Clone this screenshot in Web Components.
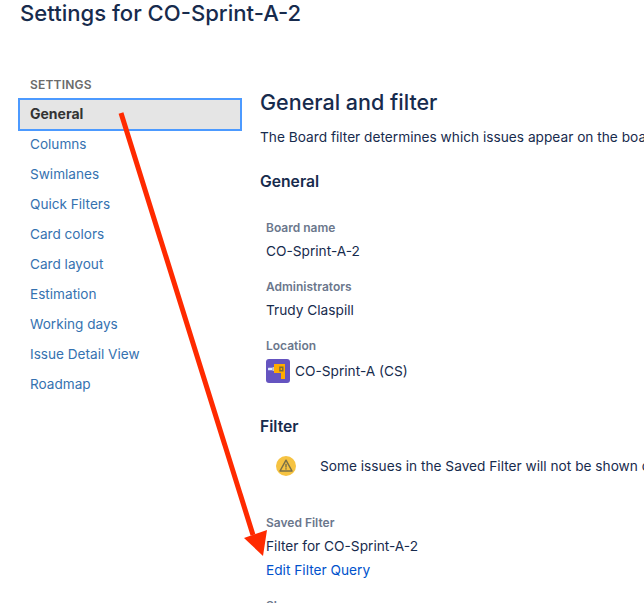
<!DOCTYPE html>
<html>
<head>
<meta charset="utf-8">
<title>Settings</title>
<style>
	html, body {
		margin: 0;
		height: 603px;
		overflow: hidden;
		background: #fff;
		font-family: Inter, "Liberation Sans", sans-serif;
	}
</style>
</head>
<body>
<settings-page>
	<span slot="title">Settings for CO-Sprint-A-2</span>
	<nav-list slot="nav" heading="SETTINGS">
		<nav-item active>General</nav-item>
		<nav-item>Columns</nav-item>
		<nav-item>Swimlanes</nav-item>
		<nav-item>Quick Filters</nav-item>
		<nav-item>Card colors</nav-item>
		<nav-item>Card layout</nav-item>
		<nav-item>Estimation</nav-item>
		<nav-item>Working days</nav-item>
		<nav-item>Issue Detail View</nav-item>
		<nav-item>Roadmap</nav-item>
	</nav-list>
	<board-settings></board-settings>
	<red-arrow slot="overlay"></red-arrow>
</settings-page>

<script>
class SettingsPage extends HTMLElement {
	constructor() {
		super();
		this.attachShadow({ mode: 'open' });
		this.shadowRoot.innerHTML = `
			<style>
				:host {
					display: block;
					position: relative;
					width: 644px;
					height: 603px;
					overflow: hidden;
				}
				h1 {
					margin: 0;
					padding: 0 0 0 20px;
					font-size: 22.1px;
					line-height: 26px;
					font-weight: 500;
					color: #172b4d;
					white-space: nowrap;
				}
				.cols {
					display: flex;
					gap: 18px;
					padding: 51px 0 0 18px;
				}
				.side { flex: 0 0 224px; }
				.main { flex: 1; min-width: 0; }
			</style>
			<h1><slot name="title"></slot></h1>
			<div class="cols">
				<div class="side"><slot name="nav"></slot></div>
				<div class="main"><slot></slot></div>
			</div>
			<slot name="overlay"></slot>
		`;
	}
}

class NavList extends HTMLElement {
	constructor() {
		super();
		this.attachShadow({ mode: 'open' });
		this.shadowRoot.innerHTML = `
			<style>
				:host { display: block; }
				h4 {
					margin: 0;
					padding: 0 0 6px 12px;
					font-size: 12px;
					line-height: 15px;
					font-weight: 600;
					color: #6b6b6b;
					letter-spacing: 0.2px;
				}
			</style>
			<h4></h4>
			<slot></slot>
		`;
	}

	connectedCallback() {
		this.shadowRoot.querySelector('h4').textContent = this.getAttribute('heading');
	}
}

class NavItem extends HTMLElement {
	constructor() {
		super();
		this.attachShadow({ mode: 'open' });
		this.shadowRoot.innerHTML = `
			<style>
				:host {
					display: block;
					box-sizing: border-box;
					height: 30px;
					padding: 0 12px;
					font-size: 13.6px;
					line-height: 30px;
					color: #3572b0;
				}
				:host([active]) {
					height: 33px;
					margin-bottom: -2px;
					padding: 0 10px;
					font-size: 14px;
					line-height: 28px;
					font-weight: 700;
					color: #333;
					background: #e5e5e5;
					border: 2px solid #4c9aff;
				}
			</style>
			<slot></slot>
		`;
	}
}

class BoardField extends HTMLElement {
	constructor() {
		super();
		this.attachShadow({ mode: 'open' });
		this.shadowRoot.innerHTML = `
			<style>
				:host { display: block; padding-left: 6px; }
				.label {
					font-size: 12px;
					line-height: 16px;
					font-weight: 600;
					color: #6b778c;
				}
				.value {
					margin-top: 3px;
					font-size: 13.7px;
					line-height: 24px;
					color: #172b4d;
				}
			</style>
			<div class="label"></div>
			<div class="value"><slot></slot></div>
		`;
	}

	connectedCallback() {
		this.shadowRoot.querySelector('.label').textContent = this.getAttribute('label');
	}
}

class ProjectIcon extends HTMLElement {
	constructor() {
		super();
		this.attachShadow({ mode: 'open' });
		this.shadowRoot.innerHTML = `
			<style>
				:host { display: block; width: 24px; height: 24px; flex: none; }
				svg { display: block; }
			</style>
			<svg width="24" height="24" viewBox="0 0 24 24">
				<rect width="24" height="24" rx="3" fill="#6554c0"/>
				<rect x="2" y="8.7" width="4.5" height="2.6" rx="0.5" fill="#deebff"/>
				<rect x="6.5" y="8" width="1.5" height="4" fill="#c1c7d0"/>
				<path d="M8 5 H19 V20 H15 V14 H8 Z" fill="#ffab00"/>
				<path d="M13.2 7.5 H17.5 V12.5 H13.2 Z M14.6 8.9 V11.1 H16.1 V8.9 Z" fill="#7a6a3a" fill-rule="evenodd"/>
			</svg>
		`;
	}
}

class WarningIcon extends HTMLElement {
	constructor() {
		super();
		this.attachShadow({ mode: 'open' });
		this.shadowRoot.innerHTML = `
			<style>
				:host { display: block; width: 20px; height: 20px; flex: none; }
				svg { display: block; }
			</style>
			<svg width="20" height="20" viewBox="0 0 20 20">
				<circle cx="10" cy="10" r="10" fill="#f6c342"/>
				<path d="M10 4.2 L16 15 H4 Z" fill="none" stroke="#7a7048" stroke-width="1.5" stroke-linejoin="round"/>
				<rect x="9.3" y="7.8" width="1.4" height="3.8" fill="#7a7048"/>
				<rect x="9.3" y="12.2" width="1.4" height="1.4" fill="#7a7048"/>
			</svg>
		`;
	}
}

class BoardSettings extends HTMLElement {
	constructor() {
		super();
		this.attachShadow({ mode: 'open' });
		this.shadowRoot.innerHTML = `
			<style>
				:host {
					display: block;
					padding-top: 11px;
					color: #172b4d;
					white-space: nowrap;
				}
				h2 {
					margin: 0;
					font-size: 21.5px;
					line-height: 28px;
					font-weight: 500;
				}
				p {
					margin: 11px 0 0;
					font-size: 13.7px;
					line-height: 20px;
				}
				h3 {
					margin: 0;
					font-size: 15.7px;
					line-height: 20px;
					font-weight: 600;
				}
				.general { margin-top: 25px; }
				.fields {
					display: flex;
					flex-direction: column;
					gap: 16px;
					margin-top: 28px;
				}
				.location {
					display: flex;
					align-items: center;
					gap: 5px;
					margin-top: 5px;
				}
				.filter { margin-top: 34px; }
				.warning {
					display: flex;
					align-items: center;
					gap: 24px;
					margin: 19px 0 0 16px;
					font-size: 13.7px;
					line-height: 20px;
				}
				.saved { margin-top: 39px; }
				a {
					display: block;
					color: #0052cc;
					text-decoration: none;
				}
				.shares { margin-top: 16px; }
			</style>
			<h2>General and filter</h2>
			<p>The Board filter determines which issues appear on the board. It can be based on one or more projects.</p>
			<h3 class="general">General</h3>
			<div class="fields">
				<board-field label="Board name">CO-Sprint-A-2</board-field>
				<board-field label="Administrators">Trudy Claspill</board-field>
				<board-field label="Location">
					<div class="location"><project-icon></project-icon>CO-Sprint-A (CS)</div>
				</board-field>
			</div>
			<h3 class="filter">Filter</h3>
			<div class="warning">
				<warning-icon></warning-icon>
				<span>Some issues in the Saved Filter will not be shown on the board.</span>
			</div>
			<board-field class="saved" label="Saved Filter">
				Filter for CO-Sprint-A-2
				<a href="#">Edit Filter Query</a>
			</board-field>
			<board-field class="shares" label="Shares"></board-field>
		`;
	}
}

class RedArrow extends HTMLElement {
	constructor() {
		super();
		this.attachShadow({ mode: 'open' });
		this.shadowRoot.innerHTML = `
			<style>
				:host { position: absolute; left: 0; top: 0; pointer-events: none; }
				svg { display: block; }
			</style>
			<svg width="644" height="603" viewBox="0 0 644 603">
				<line x1="121" y1="113" x2="253" y2="535" stroke="#ff2a00" stroke-width="5"/>
				<path d="M244 538 L267 530 L263 556 Z" fill="#ff2a00"/>
			</svg>
		`;
	}
}

customElements.define('settings-page', SettingsPage);
customElements.define('nav-list', NavList);
customElements.define('nav-item', NavItem);
customElements.define('board-field', BoardField);
customElements.define('project-icon', ProjectIcon);
customElements.define('warning-icon', WarningIcon);
customElements.define('board-settings', BoardSettings);
customElements.define('red-arrow', RedArrow);
</script>
</body>
</html>
